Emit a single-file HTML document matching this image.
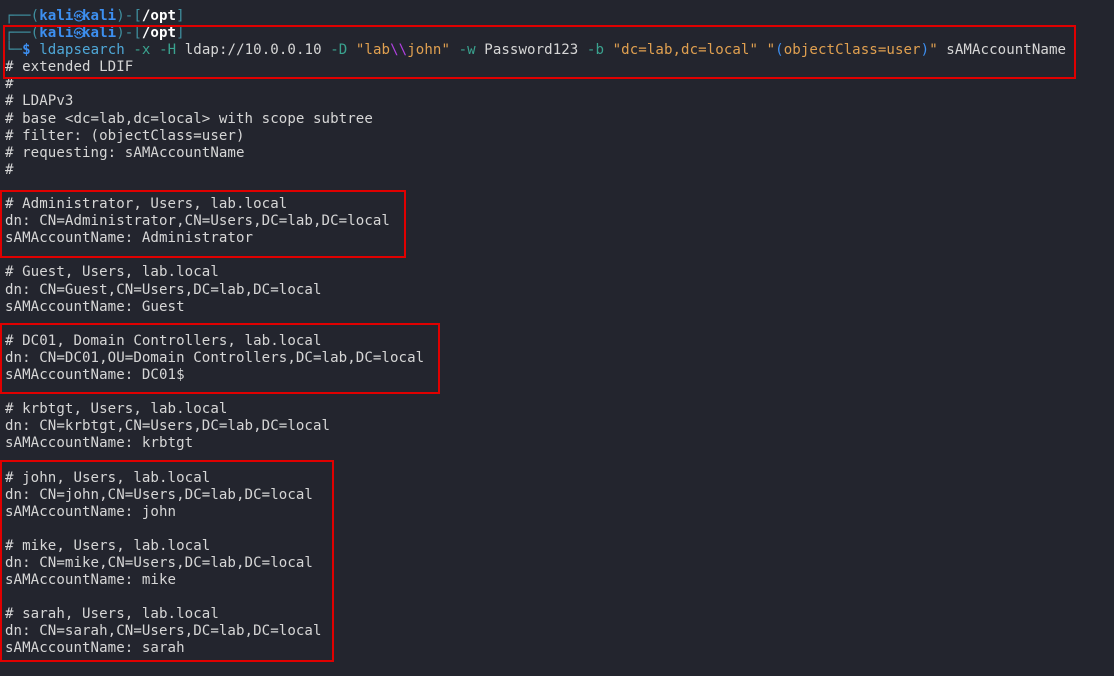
<!DOCTYPE html>
<html><head><style>
html,body{margin:0;padding:0;background:#23252e;width:1114px;height:676px;overflow:hidden}
pre{margin:0;position:absolute;left:5px;top:8px;font-family:"DejaVu Sans Mono","Liberation Mono",monospace;font-size:14.1px;line-height:17.1px;letter-spacing:0.07px;color:#d6d6d6}
.g{color:#3f8f9f}.b{color:#3d8ff0;font-weight:bold}.w{color:#fff;font-weight:bold}
.c{color:#4fa8d8}.o{color:#3aa38f}.s{color:#e0a050}.p{color:#b040e0}.bl{color:#3d8ff0}
.k{display:inline-block;width:8.5px;line-height:0;font-size:11px;text-align:center;font-weight:normal}
.box{position:absolute;border:2px solid #e00000;box-sizing:border-box}
</style></head><body>
<pre><span class="g">┌──(</span><span class="b">kali<span class="k">㉿</span>kali</span><span class="g">)-[</span><span class="w">/opt</span><span class="g">]</span>
<span class="g">┌──(</span><span class="b">kali<span class="k">㉿</span>kali</span><span class="g">)-[</span><span class="w">/opt</span><span class="g">]</span>
<span class="g">└─</span><span class="b">$</span> <span class="c">ldapsearch</span> <span class="o">-x</span> <span class="o">-H</span> ldap://10.0.0.10 <span class="o">-D</span> <span class="s">"lab</span><span class="p">\\</span><span class="s">john"</span> <span class="o">-w</span> Password123 <span class="o">-b</span> <span class="s">"dc=lab,dc=local"</span> <span class="s">"</span><span class="bl">(</span><span class="s">objectClass=user</span><span class="bl">)</span><span class="s">"</span> sAMAccountName
# extended LDIF
#
# LDAPv3
# base &lt;dc=lab,dc=local&gt; with scope subtree
# filter: (objectClass=user)
# requesting: sAMAccountName
#

# Administrator, Users, lab.local
dn: CN=Administrator,CN=Users,DC=lab,DC=local
sAMAccountName: Administrator

# Guest, Users, lab.local
dn: CN=Guest,CN=Users,DC=lab,DC=local
sAMAccountName: Guest

# DC01, Domain Controllers, lab.local
dn: CN=DC01,OU=Domain Controllers,DC=lab,DC=local
sAMAccountName: DC01$

# krbtgt, Users, lab.local
dn: CN=krbtgt,CN=Users,DC=lab,DC=local
sAMAccountName: krbtgt

# john, Users, lab.local
dn: CN=john,CN=Users,DC=lab,DC=local
sAMAccountName: john

# mike, Users, lab.local
dn: CN=mike,CN=Users,DC=lab,DC=local
sAMAccountName: mike

# sarah, Users, lab.local
dn: CN=sarah,CN=Users,DC=lab,DC=local
sAMAccountName: sarah</pre>
<div class="box" style="left:3px;top:25px;width:1073px;height:54px"></div>
<div class="box" style="left:0;top:190px;width:406px;height:68px"></div>
<div class="box" style="left:0;top:323px;width:440px;height:71px"></div>
<div class="box" style="left:0;top:460px;width:334px;height:202px"></div>
</body></html>
